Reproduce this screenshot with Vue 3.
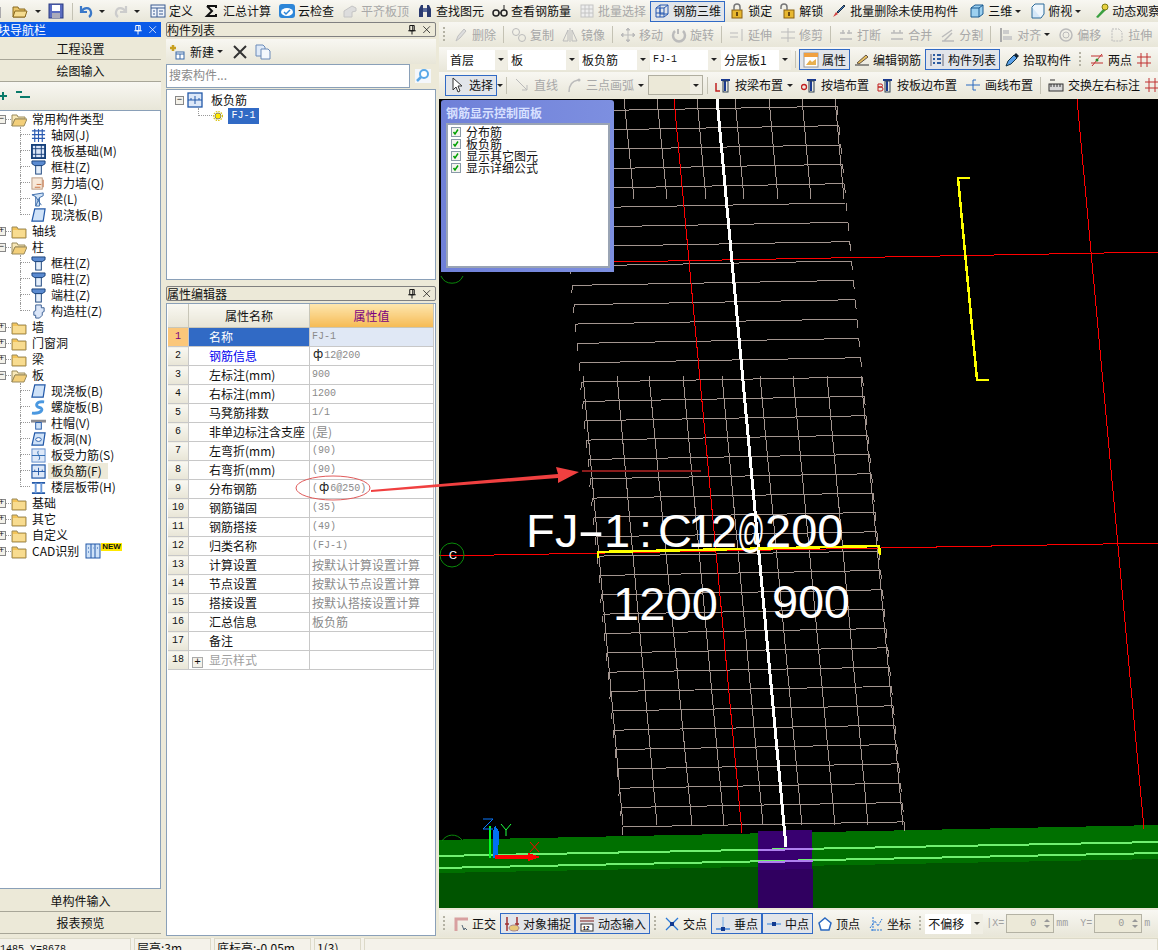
<template>
  <div class="app">
    <Bar class="bar top" :items="topBar" />

    <div class="body">
      <!-- left navigation -->
      <aside class="nav">
        <div class="nav-title">
          <span class="nav-name">模块导航栏</span>
          <span class="title-icons"><Ico n="pin" class="white" /><Ico n="close" class="white" /></span>
        </div>
        <button class="nav-btn first">工程设置</button>
        <button class="nav-btn">绘图输入</button>
        <div class="nav-tools">
          <Ico n="plus" /><Ico n="minus" />
        </div>
        <div class="nav-tree">
          <template v-for="group in tree" :key="group.name">
            <div class="tree-row">
              <span class="box">{{ group.open ? '−' : '+' }}</span>
              <span class="dash"></span>
              <Ico :n="group.open ? 'folderOpen' : 'folder'" class="folder" />
              <span class="group-name">{{ group.name }}</span>
              <template v-if="group.cad">
                <Ico n="cad" class="cad" />
                <span class="new">NEW</span>
              </template>
            </div>
            <template v-if="group.open">
              <div v-for="(c, i) in group.children" :key="c.t" class="tree-row child">
                <span class="tick" :class="{ more: i < group.children.length - 1 }"></span>
                <Ico :n="c.i" class="child-icon" />
                <span class="child-name" :class="{ current: c.cur }">{{ c.t }}</span>
              </div>
            </template>
          </template>
        </div>
        <button class="nav-btn bottom">单构件输入</button>
        <button class="nav-btn">报表预览</button>
      </aside>

      <!-- component list + property editor -->
      <section class="mid">
        <div class="pane-title">
          <span>构件列表</span>
          <span class="title-icons"><Ico n="pin" /><Ico n="close" /></span>
        </div>
        <div class="list-tools">
          <Ico n="newItem" class="new-ico" />
          <span>新建</span>
          <i class="caret"></i>
          <Ico n="cross" class="x-ico" />
          <Ico n="copy" />
        </div>
        <div class="search">
          <div class="search-input">搜索构件...</div>
          <div class="search-btn"><Ico n="search" /></div>
        </div>
        <div class="list-tree">
          <div class="list-row">
            <span class="box">−</span>
            <Ico n="slabBar" class="list-ico" />
            <span>板负筋</span>
          </div>
          <div class="list-row leaf">
            <span class="tick wide"></span>
            <Ico n="gear" class="gear" />
            <span class="picked">FJ-1</span>
          </div>
        </div>

        <div class="pane-title second">
          <span>属性编辑器</span>
          <span class="title-icons"><Ico n="pin" /><Ico n="close" /></span>
        </div>
        <div class="props">
          <table>
            <thead>
              <tr>
                <th class="num"></th>
                <th class="pname">属性名称</th>
                <th class="pvalue">属性值</th>
              </tr>
            </thead>
            <tbody>
              <tr v-for="(p, i) in props" :key="p.n" :class="{ sel: i === 0 }">
                <td class="num">{{ i + 1 }}</td>
                <td class="pname" :class="{ link: p.link, mute: p.mute }">
                  <span v-if="p.mute" class="plus-box">+</span>{{ p.n }}
                </td>
                <td class="pvalue" :class="{ mono: p.mono }">{{ p.pre }}<span v-if="p.sym" class="sym">ф</span>{{ p.v }}</td>
              </tr>
            </tbody>
          </table>
        </div>
      </section>

      <!-- drawing area -->
      <section class="work">
        <Bar class="bar r2" :items="row2" />
        <Bar class="bar r3" :items="row3" />
        <Bar class="bar r4" :items="row4" />

        <div class="canvas">
          <svg class="scene" viewBox="439 99 719 809" shape-rendering="crispEdges">
            <polygon points="439,840 1158,825 1158,908 439,908" fill="#007000" />
            <polygon points="439,873 1158,859 1158,908 439,908" fill="#005400" />
            <polygon points="758,831 812,830 813,908 758,908" fill="#380070" />
            <polygon points="758,870 813,869 813,908 758,908" fill="#300060" />
            <line x1="439" y1="856" x2="1158" y2="842" stroke="#70f070" stroke-width="2" />
            <line x1="439" y1="868" x2="1158" y2="853" stroke="#70f070" stroke-width="2" />
            <line x1="758" y1="850" x2="813" y2="849" stroke="#b080f0" stroke-width="2" />
            <line x1="758" y1="862" x2="813" y2="861" stroke="#b080f0" stroke-width="2" />

            <g stroke="#a3958f" stroke-width="1" fill="none">
              <line v-for="(l, i) in meshLines" :key="i" :x1="l[0]" :y1="l[1]" :x2="l[2]" :y2="l[3]" />
            </g>

            <line x1="674" y1="99" x2="742" y2="833" stroke="#f00" />
            <line x1="1077" y1="99" x2="1144" y2="829" stroke="#f00" />
            <line x1="614" y1="262" x2="1158" y2="252" stroke="#f00" />
            <line x1="439" y1="556" x2="1158" y2="543" stroke="#f00" />
            <line x1="717" y1="99" x2="786" y2="847" stroke="#fff" stroke-width="3" />

            <polyline points="970,178 958,178 977,380 989,380" fill="none" stroke="#ff0" stroke-width="2.5" />
            <polyline points="598,558 598,552 879,546 880,555" fill="none" stroke="#ff0" stroke-width="2.5" />
            <line x1="582" y1="471" x2="701" y2="471" stroke="#8a1c1c" stroke-width="2" />

            <g fill="none" stroke="#0a8a0a" shape-rendering="auto">
              <circle cx="452" cy="555" r="12" />
              <path d="M441 276 A12 12 0 0 0 463 276" />
              <path d="M442 841 A12 12 0 0 1 462 840" />
            </g>
            <g shape-rendering="auto" class="cad-text">
              <text x="449" y="559" class="grid-mark">C</text>
              <text x="526 555" y="547" class="big">FJ</text>
              <text x="577" y="547" class="big" textLength="28" lengthAdjust="spacingAndGlyphs">-</text>
              <text x="604 639 658 688 711" y="547" class="big">1:C12</text>
              <text x="737" y="547" class="big" textLength="28" lengthAdjust="spacingAndGlyphs">@</text>
              <text x="765" y="547" class="big">200</text>
              <text x="613" y="620" class="big" textLength="105">1200</text>
              <text x="772" y="618" class="big" textLength="78">900</text>
            </g>

            <line x1="490" y1="826" x2="490" y2="858" stroke="#00ff20" stroke-width="2" />
            <polygon points="493,858 493,832 495,825 499,832 498,858" fill="#0070f0" />
            <polygon points="495,855 528,855 528,853 541,857 528,861 528,859 495,859" fill="#f00" />
            <g shape-rendering="auto" fill="none" stroke-width="1">
              <path d="M483 819 H493 L483 829 H493" stroke="#0a78ff" />
              <path d="M501 824 L506 830 L511 824 M506 830 V836" stroke="#20ff40" />
              <path d="M530 842 L539 852 M539 842 L530 852" stroke="#f00" />
            </g>
          </svg>

          <div class="float">
            <div class="float-title">钢筋显示控制面板</div>
            <div class="float-body">
              <div v-for="c in checks" :key="c" class="check-row">
                <span class="check"><Ico n="tick" /></span>{{ c }}
              </div>
            </div>
          </div>
        </div>

        <Bar class="bar r5" :items="row5" />
      </section>
    </div>

    <footer class="status">
      <span class="cell c1">X=-1485 Y=8678</span>
      <span class="cell c2">层高:3m</span>
      <span class="cell c3">底标高:-0.05m</span>
      <span class="cell c4">1(3)</span>
      <span class="cell c5"></span>
    </footer>

    <!-- hand drawn note on top of the screenshot -->
    <svg class="note" viewBox="0 0 1158 950">
      <ellipse cx="333" cy="488" rx="37" ry="12" fill="none" stroke="#e05a5a" />
      <polygon points="371,490 558,474 556,467 579,472 558,483 558,478 371,492" fill="#f04040" />
    </svg>
  </div>
</template>

<script setup>
import { h } from 'vue'

const icons = {
  page: '<path d="M3 1h8l3 3v11H3z" fill="#fff" stroke="#667"/>',
  open: '<path d="M1 4h5l1 2h6v8H1z" fill="#e8c468" stroke="#8a6a20"/><path d="M3 8h12l-2 6H1z" fill="#f5dc90" stroke="#8a6a20"/>',
  save: '<rect x="1" y="1" width="14" height="14" fill="#5a6cc0" stroke="#2a3a80"/><rect x="4" y="2" width="8" height="6" fill="#fff"/><rect x="4" y="10" width="8" height="5" fill="#aab"/>',
  undo: '<path d="M3 3v6h6M3.5 8.5C6 4 12 4 13 9c.4 2-.5 4-2 5" fill="none" stroke="#3a78c8" stroke-width="2.2"/>',
  redo: '<path d="M13 3v6H7M12.500 8.500C10 4 4 4 3 9c-.4 2 .5 4 2 5" fill="none" stroke="#ccc" stroke-width="2.200"/>',
  define: '<rect x="1" y="2" width="14" height="12" fill="#eef3fb" stroke="#3a5a90"/><path d="M1 5h14M7 5v9M9 8h4M9 11h4M3 8h2M3 11h2" stroke="#3a5a90"/>',
  sigma: '<path d="M3 3h9v2M3 3l5 5-5 5h9v-2" fill="none" stroke="#111" stroke-width="2"/>',
  cloud: '<rect x="0" y="1" width="16" height="14" rx="3" fill="#2d86d8"/><ellipse cx="8" cy="9" rx="6" ry="4" fill="#fff"/><path d="M5 9l2 2 4-4" fill="none" stroke="#2d86d8" stroke-width="1.500"/>',
  level: '<path d="M2 13V8l8-5 4 2v3l-4 1v5H2z" fill="#ddd" stroke="#c4c4c4"/>',
  binoc: '<path d="M2 14V6l2-4h2v12zM10 14V2h2l2 4v8z" fill="#2a3a70"/><rect x="6" y="5" width="4" height="4" fill="#5a6a9a"/>',
  glasses: '<circle cx="4" cy="10" r="3" fill="none" stroke="#222" stroke-width="1.500"/><circle cx="12" cy="10" r="3" fill="none" stroke="#222" stroke-width="1.500"/><path d="M7 10h2M12 7V2" stroke="#222"/>',
  batch: '<rect x="2" y="2" width="12" height="12" fill="#eee" stroke="#c4c4c4"/><path d="M2 6h12M2 10h12M6 2v12M10 2v12" stroke="#c4c4c4"/>',
  grid3d: '<path d="M2 5l4-3h8v9l-4 3H2zM2 5h8v9M10 5l4-3M6 2v9H14M2 10h8M6 5v9" fill="none" stroke="#2858b0"/>',
  lock: '<rect x="3" y="7" width="10" height="8" fill="#e8b830" stroke="#8a6010"/><path d="M5 7V4a3 3 0 0 1 6 0v3" fill="none" stroke="#777" stroke-width="1.500"/><rect x="7" y="9" width="2" height="4" fill="#6a4a10"/>',
  unlock: '<rect x="4" y="7" width="10" height="8" fill="#e8b830" stroke="#8a6010"/><path d="M1 6V4a3 3 0 0 1 6 0v3" fill="none" stroke="#777" stroke-width="1.500"/><rect x="8" y="9" width="2" height="4" fill="#6a4a10"/>',
  brush: '<path d="M2 14l3-5 2 2z" fill="#d04040"/><path d="M6 9l7-7 1 1-7 7z" fill="#3a78c8" stroke="#234"/>',
  cube: '<path d="M2 5l4-3h8v9l-4 3H2z" fill="#9cd0f0" stroke="#1a5a90"/><path d="M2 5h8v9M10 5l4-3" fill="none" stroke="#1a5a90"/>',
  plan: '<path d="M3 4h9v11H3z" fill="#d5e8f8" stroke="#2a6a9a"/><path d="M3 4l3-3h9v10l-3 4" fill="#eef6fc" stroke="#2a6a9a"/>',
  orbit: '<path d="M3 14L11 5l2 2-8 8z" fill="#3aa040"/><circle cx="12" cy="4" r="3" fill="#e8d040" stroke="#7a7a10"/>',
  del: '<path d="M3 14l2-5 6-7 2 2-6 7z" fill="#ddd" stroke="#c0c0c0"/>',
  copyOff: '<circle cx="5" cy="5" r="3.500" fill="none" stroke="#bbb"/><circle cx="11" cy="11" r="3.500" fill="none" stroke="#bbb"/>',
  mirror: '<path d="M1 14L6 3v11zM15 14L10 3v11zM8 1v14" fill="none" stroke="#bbb"/>',
  move: '<path d="M8 1v14M1 8h14M8 1L6 3h4zM8 15l-2-2h4zM1 8l2-2v4zM15 8l-2-2v4z" stroke="#bbb" fill="#bbb"/>',
  rotate: '<path d="M4 4a6 6 0 1 0 8 0" fill="none" stroke="#bbb" stroke-width="2.500"/><path d="M7 2v5" stroke="#bbb" stroke-width="2"/>',
  extend: '<path d="M1 6h8M1 10h8M13 2v12" stroke="#bbb" fill="none"/>',
  trim: '<path d="M1 5h14M1 11h14M8 1v14" stroke="#bbb" fill="none"/>',
  breakOff: '<path d="M2 6h5M9 6h5M2 12h12M5 3v4M11 3v4" stroke="#bbb" stroke-width="1.500" fill="none"/>',
  merge: '<path d="M2 6h12M2 12h12M5 3v3M11 3v3" stroke="#bbb" stroke-width="1.500" fill="none"/>',
  split: '<path d="M2 14h12M2 10l10-7M4 14l8-8" stroke="#bbb" stroke-width="1.500" fill="none"/>',
  align: '<path d="M3 1v14" stroke="#aaa" stroke-width="2"/><rect x="5" y="3" width="6" height="4" fill="#ccc"/><rect x="5" y="9" width="9" height="4" fill="#ccc"/>',
  offset: '<circle cx="8" cy="8" r="6" fill="none" stroke="#bbb" stroke-width="1.500"/><circle cx="8" cy="8" r="3" fill="none" stroke="#bbb"/>',
  stretch: '<path d="M3 2h7l3 3v9H3z" fill="none" stroke="#bbb" stroke-dasharray="2 1"/>',
  attr: '<rect x="1" y="1" width="14" height="14" fill="#fff" stroke="#999"/><rect x="1" y="1" width="14" height="4" fill="#f0a040"/><path d="M3 13l4-5 2 2 4-3v6z" fill="#e8b050"/>',
  edit: '<path d="M1 13h14" stroke="#333"/><path d="M3 11L12 3l2 2-9 7z" fill="#e8c060" stroke="#654"/>',
  list: '<path d="M2 2v12M14 2v12" stroke="#667" /><path d="M4 3h2M8 3h4M4 7h2M8 7h4M4 11h2M8 11h4" stroke="#2a5aa0" stroke-width="2"/>',
  pick: '<path d="M2 14l2-5 6-6 3 3-6 6z" fill="#5aa0e8" stroke="#134"/><path d="M10 3l2-2 3 3-2 2z" fill="#123"/>',
  twoPt: '<path d="M3 14L13 2M2 4h12M2 11h12" stroke="#c03030" fill="none"/><circle cx="8" cy="8" r="1.500" fill="#2a8a2a"/>',
  cross2: '<path d="M1 5h14M1 11h14M5 1v14M11 1v14" stroke="#c03030" fill="none"/>',
  arrow: '<path d="M4 1v12l3-3 2 5 2-1-2-5h4z" fill="#fff" stroke="#333"/>',
  line: '<path d="M2 2l11 11M13 8v5H8" fill="none" stroke="#bbb"/>',
  arc: '<path d="M3 15C3 8 6 4 12 3" fill="none" stroke="#bbb" stroke-width="1.500"/><circle cx="13" cy="3" r="1.500" fill="#bbb"/>',
  beamL: '<path d="M6 3h9M10 3v11" stroke="#1a3a90" stroke-width="2" fill="none"/><path d="M1 6v8h4" fill="none" stroke="#c02020" stroke-width="1.500"/><rect x="8" y="4" width="5" height="11" fill="none" stroke="#345"/>',
  wallQ: '<path d="M6 3h9M10 3v11" stroke="#1a3a90" stroke-width="2" fill="none"/><circle cx="3" cy="10" r="2.500" fill="none" stroke="#c02020" stroke-width="1.300"/><rect x="8" y="4" width="5" height="11" fill="none" stroke="#345"/>',
  edgeB: '<path d="M6 3h9M10 3v11" stroke="#1a3a90" stroke-width="2" fill="none"/><path d="M1 7h3a1.500 1.500 0 0 1 0 3H1h3a1.500 1.500 0 0 1 0 4H1z" fill="none" stroke="#c02020"/><rect x="8" y="4" width="5" height="11" fill="none" stroke="#345"/>',
  drawLine: '<path d="M1 8h14M8 3v10M8 3h3M8 13h3" stroke="#2a6ac0" fill="none"/>',
  swap: '<rect x="1" y="7" width="14" height="7" fill="#d8d8d8" stroke="#333"/><path d="M3 7v3M6 7v3M9 7v3M12 7v3M2 3h5" stroke="#333"/>',
  ortho: '<path d="M3 15V3h12" fill="none" stroke="#d8a0a0" stroke-width="3"/><path d="M9 9l2 5 1-2 2 2" stroke="#567" fill="none"/>',
  snap: '<path d="M3 1v14M13 1v14M1 8h4M11 8h4" stroke="#a03030" stroke-width="1.500"/><ellipse cx="10" cy="12" rx="5" ry="3" fill="#e8c878" stroke="#a88"/>',
  dyn: '<path d="M1 2h14M1 5h14" stroke="#a06060" stroke-width="1.500"/><rect x="2" y="8" width="12" height="7" fill="#fff" stroke="#333"/><text x="3.500" y="14" font-size="6" font-family="Liberation Mono" font-weight="700">12</text>',
  inter: '<path d="M2 2l12 12M14 2L2 14" stroke="#2a78d8" stroke-width="1.300"/><rect x="6" y="6" width="4" height="4" fill="#123a90"/>',
  perp: '<path d="M1 13h14" stroke="#2a78d8" stroke-width="1.300"/><path d="M8 1v14" stroke="#8ab8e8" stroke-width="1.300"/><rect x="6" y="11" width="4" height="4" fill="#123a90"/>',
  mid: '<path d="M1 8h14" stroke="#6aa0e0" stroke-width="1.500"/><rect x="6" y="6" width="4" height="4" fill="#123a90"/>',
  vertex: '<path d="M8 2l6 5-2 7H4L2 7z" fill="#fff" stroke="#2a68c0" stroke-width="1.500"/>',
  coord: '<path d="M3 14h12M5 1v14M2 12l5-7 3 5 4-7" fill="none" stroke="#2a78d8" stroke-dasharray="2 1"/>',
  pin: '<path d="M5 2h6v7H5zM3 9h10M8 9v5M9 2v7" fill="none" stroke="currentColor" stroke-width="1.300"/>',
  close: '<path d="M3 3l9 9M12 3l-9 9" stroke="currentColor" fill="none"/>',
  plus: '<path d="M6 2v8M2 6h8" stroke="#0a7a6a" stroke-width="2"/>',
  minus: '<path d="M1 2h6M5 7h10" stroke="#0a7a6a" stroke-width="2"/>',
  folder: '<path d="M1 4h5l1 2h8v9H1z" fill="#f3c45a" stroke="#9a8a5a"/><rect x="2" y="7" width="12" height="7" fill="#f8dc90"/>',
  folderOpen: '<path d="M1 4h5l1 2h7v2H4l-3 7z" fill="#f8e8b8" stroke="#9a8a5a"/><path d="M4 8h12l-3 7H1z" fill="#f3cf7a" stroke="#9a8a5a"/>',
  axis: '<path d="M1 3h14M1 7h14M1 11h14M4 1v14M8 1v14M12 1v14" stroke="#2858b0" stroke-width="1.200"/>',
  raft: '<rect x="1" y="1" width="14" height="14" fill="#dbe6f8" stroke="#16407a" stroke-width="2"/><path d="M1 5h14M1 11h14M5 1v14M11 1v14" stroke="#16407a"/>',
  column: '<path d="M1 1h14v3l-3 2H4L1 4z" fill="#5a8ad0" stroke="#16407a"/><rect x="5" y="6" width="6" height="9" fill="#e4eefa" stroke="#16407a"/>',
  wall: '<rect x="1" y="2" width="11" height="12" fill="#f8e8d8" stroke="#b89880"/><path d="M4 12h6M6 9h5M13 4v8" stroke="#c87040"/>',
  beam: '<path d="M1 3l12-2v3L9 6v9H5V5z" fill="#cfe2f6" stroke="#3a6aa8"/><path d="M5 5l6 9M9 6l-4 9" stroke="#3a6aa8"/>',
  slab: '<path d="M4 1h11l-2 13H1z" fill="#cfe2f8" stroke="#2258a8" stroke-width="1.300"/>',
  tie: '<path d="M5 1h6v3h3v4l-2 1v3l-3 3H5V12H3V8l2-1z" fill="#dbe6f8" stroke="#345a90"/>',
  spiral: '<path d="M14 2C5 1 4 7 9 8c5 1 3 7-8 6" fill="none" stroke="#4a98e0" stroke-width="3"/>',
  cap: '<path d="M0 4h16v3H0z" fill="#8a8a90"/><rect x="5" y="7" width="6" height="7" fill="#cfe2f8" stroke="#2258a8"/>',
  hole: '<path d="M4 1h11l-2 13H1z" fill="#cfe2f8" stroke="#2258a8" stroke-width="1.300"/><ellipse cx="8" cy="8" rx="3" ry="2" fill="#fff" stroke="#2258a8"/>',
  stress: '<rect x="1" y="1" width="14" height="14" fill="#dde8f8" stroke="#5a88c8"/><path d="M1 8h14M8 3c-3 3 4 7 0 10" fill="none" stroke="#2a68b0"/>',
  slabBar: '<rect x="1" y="1" width="14" height="14" fill="#dde8f8" stroke="#2258a8" stroke-width="1.300"/><path d="M1 8h14M8 4v8M4 6v2M12 6v2" stroke="#2258a8"/>',
  strip: '<path d="M1 3h14M1 14h14" stroke="#2258a8" stroke-width="2"/><path d="M5 3v11M11 3v11" stroke="#6a98d8" stroke-width="2"/>',
  cad: '<rect x="1" y="1" width="14" height="14" fill="#cfe2f8" stroke="#2258a8"/><path d="M6 1v14M10 1v14M3 5h1M3 9h1M8 5h0.500M12 5h1" stroke="#2258a8"/>',
  newItem: '<path d="M4 1v6M1 4h6" stroke="#c8a020" stroke-width="2.500"/><rect x="7" y="8" width="8" height="7" fill="#fff" stroke="#3a6aa8"/><path d="M7 10h8M11 10v5" stroke="#3a6aa8"/>',
  cross: '<path d="M2 2l12 12M14 2L2 14" stroke="#333" stroke-width="2"/>',
  copy: '<path d="M1 1h7l2 2v9H1z" fill="#dfeaf8" stroke="#6a8ab8"/><path d="M6 5h7l2 2v8H6z" fill="#f4f8fd" stroke="#6a8ab8"/>',
  search: '<rect x="0" y="1" width="16" height="14" fill="#f4f7fb"/><circle cx="9" cy="6" r="4" fill="#fff" stroke="#5aa8e8" stroke-width="2"/><path d="M6 9l-4 4" stroke="#5aa8e8" stroke-width="2.500"/>',
  gear: '<circle cx="8" cy="8" r="4" fill="#ffe800" stroke="#666"/><circle cx="8" cy="8" r="6" fill="none" stroke="#d8c000" stroke-width="1.500" stroke-dasharray="2 1.500"/>',
  tick: '<path d="M3 8l3 4 6-9" fill="none" stroke="#00a000" stroke-width="3"/>'
}

// small helpers, written as render functions so the bars can be plain data
const Ico = (p) => h('svg', { class: 'ico', viewBox: '0 0 16 16', innerHTML: icons[p.n] })
Ico.props = ['n']

const renderItem = (t, i) => {
  if (t.sep) return h('span', { key: i, class: 'sep' })
  if (t.grip) return h('span', { key: i, class: 'grip' })
  if (t.gap) return h('span', { key: i, style: { width: t.gap + 'px', flex: 'none' } })
  if (t.combo !== undefined) {
    return h('span', { key: i, class: ['combo', { flat: t.flat }], style: { width: t.w + 'px' } }, [
      h('span', { class: ['combo-text', { latin: t.latin }] }, t.combo),
      h('span', { class: 'combo-btn' }, [h('i', { class: 'caret' })])
    ])
  }
  if (t.spin) {
    return h('span', { key: i, class: 'spin' }, [
      h('span', { class: 'spin-val' }, '0'),
      h('span', { class: 'spin-arrows' }, [h('i', { class: 'up' }), h('i', { class: 'down' })])
    ])
  }
  if (t.label) return h('span', { key: i, class: 'faint' }, t.label)
  return h('span', { key: i, class: ['tool', { off: t.off, on: t.on, only: !t.t }] }, [
    t.i ? h(Ico, { n: t.i }) : null,
    t.t ? h('span', t.t) : null,
    t.caret ? h('i', { class: 'caret' }) : null
  ])
}

const Bar = (p) => h('div', p.items.map(renderItem))
Bar.props = ['items']

const topBar = [
  { i: 'page' }, { gap: 10 }, { i: 'open' }, { gap: 7 }, { caret: true }, { gap: 7 }, { i: 'save' }, { gap: 5 }, { sep: true }, { gap: 2 },
  { i: 'undo' }, { gap: 5 }, { caret: true }, { gap: 8 }, { i: 'redo', off: true }, { gap: 5 }, { caret: true }, { gap: 6 },
  { i: 'define', t: '定义' }, { gap: 3 }, { i: 'sigma', t: '汇总计算' }, { i: 'cloud', t: '云检查' },
  { i: 'level', t: '平齐板顶', off: true }, { i: 'binoc', t: '查找图元' }, { i: 'glasses', t: '查看钢筋量' },
  { i: 'batch', t: '批量选择', off: true }, { i: 'grid3d', t: '钢筋三维', on: true },
  { i: 'lock', t: '锁定' }, { i: 'unlock', t: '解锁' }, { i: 'brush', t: '批量删除未使用构件' }, { gap: 3 },
  { i: 'cube', t: '三维', caret: true }, { i: 'plan', t: '俯视', caret: true }, { gap: 4 }, { i: 'orbit', t: '动态观察' }
]

const row2 = [
  { grip: true }, { i: 'del', t: '删除', off: true }, { sep: true },
  { i: 'copyOff', t: '复制', off: true }, { i: 'mirror', t: '镜像', off: true }, { sep: true },
  { i: 'move', t: '移动', off: true }, { i: 'rotate', t: '旋转', off: true }, { sep: true },
  { i: 'extend', t: '延伸', off: true }, { i: 'trim', t: '修剪', off: true }, { sep: true },
  { i: 'breakOff', t: '打断', off: true }, { i: 'merge', t: '合并', off: true }, { i: 'split', t: '分割', off: true }, { sep: true },
  { i: 'align', t: '对齐', off: true, caret: true }, { i: 'offset', t: '偏移', off: true }, { i: 'stretch', t: '拉伸', off: true }
]

const row3 = [
  { combo: '首层', w: 60 }, { combo: '板', w: 70 }, { combo: '板负筋', w: 70 },
  { combo: 'FJ-1', w: 70, latin: true }, { combo: '分层板1', w: 70 }, { sep: true },
  { i: 'attr', t: '属性', on: true }, { i: 'edit', t: '编辑钢筋' }, { i: 'list', t: '构件列表', on: true },
  { i: 'pick', t: '拾取构件' }, { grip: true }, { i: 'twoPt', t: '两点' }, { i: 'cross2' }
]

const row4 = [
  { i: 'arrow', t: '选择', on: true }, { caret: true }, { sep: true },
  { i: 'line', t: '直线', off: true }, { i: 'arc', t: '三点画弧', off: true, caret: true },
  { combo: '', w: 55, flat: true }, { sep: true },
  { i: 'beamL', t: '按梁布置', caret: true }, { i: 'wallQ', t: '按墙布置' }, { i: 'edgeB', t: '按板边布置' },
  { i: 'drawLine', t: '画线布置' }, { sep: true }, { i: 'swap', t: '交换左右标注' }, { i: 'cross2' }
]

const row5 = [
  { grip: true }, { i: 'ortho', t: '正交' }, { i: 'snap', t: '对象捕捉', on: true }, { i: 'dyn', t: '动态输入', on: true },
  { grip: true }, { i: 'inter', t: '交点' }, { i: 'perp', t: '垂点', on: true }, { i: 'mid', t: '中点', on: true },
  { i: 'vertex', t: '顶点' }, { i: 'coord', t: '坐标' }, { grip: true }, { combo: '不偏移', w: 58 },
  { label: '|X=' }, { spin: true }, { label: 'mm' }, { gap: 8 }, { label: 'Y=' }, { spin: true }, { label: 'm' }
]

const tree = [
  {
    name: '常用构件类型', open: true,
    children: [
      { i: 'axis', t: '轴网(J)' }, { i: 'raft', t: '筏板基础(M)' }, { i: 'column', t: '框柱(Z)' },
      { i: 'wall', t: '剪力墙(Q)' }, { i: 'beam', t: '梁(L)' }, { i: 'slab', t: '现浇板(B)' }
    ]
  },
  { name: '轴线' },
  {
    name: '柱', open: true,
    children: [
      { i: 'column', t: '框柱(Z)' }, { i: 'column', t: '暗柱(Z)' }, { i: 'column', t: '端柱(Z)' }, { i: 'tie', t: '构造柱(Z)' }
    ]
  },
  { name: '墙' },
  { name: '门窗洞' },
  { name: '梁' },
  {
    name: '板', open: true,
    children: [
      { i: 'slab', t: '现浇板(B)' }, { i: 'spiral', t: '螺旋板(B)' }, { i: 'cap', t: '柱帽(V)' }, { i: 'hole', t: '板洞(N)' },
      { i: 'stress', t: '板受力筋(S)' }, { i: 'slabBar', t: '板负筋(F)', cur: true }, { i: 'strip', t: '楼层板带(H)' }
    ]
  },
  { name: '基础' },
  { name: '其它' },
  { name: '自定义' },
  { name: 'CAD识别', cad: true }
]

const props = [
  { n: '名称', v: 'FJ-1', mono: true },
  { n: '钢筋信息', sym: true, v: '12@200', link: true, mono: true },
  { n: '左标注(mm)', v: '900', mono: true },
  { n: '右标注(mm)', v: '1200', mono: true },
  { n: '马凳筋排数', v: '1/1', mono: true },
  { n: '非单边标注含支座', v: '(是)' },
  { n: '左弯折(mm)', v: '(90)', mono: true },
  { n: '右弯折(mm)', v: '(90)', mono: true },
  { n: '分布钢筋', pre: '(', sym: true, v: '6@250)', mono: true },
  { n: '钢筋锚固', v: '(35)', mono: true },
  { n: '钢筋搭接', v: '(49)', mono: true },
  { n: '归类名称', v: '(FJ-1)', mono: true },
  { n: '计算设置', v: '按默认计算设置计算' },
  { n: '节点设置', v: '按默认节点设置计算' },
  { n: '搭接设置', v: '按默认搭接设置计算' },
  { n: '汇总信息', v: '板负筋' },
  { n: '备注', v: '' },
  { n: '显示样式', v: '', mute: true }
]

const checks = ['分布筋', '板负筋', '显示其它图元', '显示详细公式']

// rebar mesh of the 3D view
const meshLines = []
for (let i = 0; i < 38; i++) {
  const yr = 106.3 + 19.34 * i
  const xr = 837 + (yr - 106) * 0.0936
  const xl = xr - 281
  const yl = yr + 5
  meshLines.push([xl, yl, xr, yr], [xl, yl, xl - 0.5, yl + 8], [xr, yr, xr + 1, yr + 9])
}
const upper = [[624, 634], [657, 667], [697, 706], [735, 744], [769, 778], [802, 811], [835, 844]]
upper.forEach(([a, b]) => meshLines.push([a, 99, b, 199]))
const lower = [[583, 623], [617, 657], [649, 692], [683, 724], [722, 763], [760, 802], [793, 835], [827, 868], [861, 903]]
lower.forEach(([a, b]) => meshLines.push([a, 376, b, 825]))
</script>

<style>
html,
body {
  margin: 0;
  overflow: hidden;
}
</style>

<style scoped>
.app {
  position: relative;
  width: 1158px;
  height: 950px;
  overflow: hidden;
  background: #ece9d8;
  font: 12px/16px "Noto Sans CJK SC", "Liberation Sans", sans-serif;
  color: #111;
  display: flex;
  flex-direction: column;
}

.app :deep(.ico) {
  width: 16px;
  height: 16px;
  flex: none;
  display: block;
}

.bar {
  display: flex;
  align-items: center;
  flex: none;
  overflow: hidden;
  white-space: nowrap;
  background: linear-gradient(#f8f7f2, #e8e6d8);
}

.top {
  height: 22px;
  margin-left: -14px;
  width: 1172px;
}

.bar :deep(.tool) {
  display: inline-flex;
  align-items: center;
  gap: 4px;
  padding: 0 3px;
  height: 21px;
  box-sizing: border-box;
  border: 1px solid transparent;
  flex: none;
}

.top :deep(.tool) {
  gap: 3px;
}

.bar :deep(.tool.only) {
  padding: 0;
  border: 0;
}

.r2 :deep(.tool),
.r3 :deep(.tool),
.r5 :deep(.tool) {
  gap: 3px;
}

.r2 :deep(.sep) {
  margin: 0 2px;
}

.bar :deep(.tool.off) {
  color: #a8a8a8;
}

.bar :deep(.tool.on) {
  border-color: #316ac5;
  background: #e2e5ea;
}

.bar :deep(.caret),
.list-tools .caret {
  display: block;
  width: 0;
  height: 0;
  flex: none;
  border: 3px solid transparent;
  border-top: 3px solid #222;
  border-bottom: 0;
}

.bar :deep(.sep) {
  width: 1px;
  height: 17px;
  margin: 0 3px;
  background: #c4c2b4;
  flex: none;
}

.bar :deep(.grip) {
  width: 2px;
  height: 16px;
  margin: 0 4px;
  flex: none;
  background: repeating-linear-gradient(#b4b2a4 0 2px, transparent 2px 4px);
}

.bar :deep(.combo) {
  display: inline-flex;
  align-items: center;
  justify-content: space-between;
  height: 20px;
  margin-right: 1px;
  background: #fff;
  box-sizing: border-box;
  flex: none;
  padding-left: 3px;
}

.bar :deep(.combo.flat) {
  background: #ece9d8;
  border: 1px solid #b0aea0;
}

.bar :deep(.combo-text.latin) {
  font: 10px "Liberation Mono", monospace;
}

.bar :deep(.combo-btn) {
  width: 12px;
  height: 100%;
  display: flex;
  align-items: center;
  justify-content: center;
  background: #f0eee4;
}

.bar :deep(.spin) {
  display: inline-flex;
  align-items: center;
  justify-content: flex-end;
  width: 48px;
  height: 19px;
  box-sizing: border-box;
  border: 1px solid #b4b2a4;
  background: #ece9d8;
  color: #999;
  flex: none;
  font: 10px "Liberation Mono", monospace;
}

.bar :deep(.spin-arrows) {
  width: 12px;
  margin-left: 5px;
  display: flex;
  flex-direction: column;
  align-items: center;
  gap: 3px;
}

.bar :deep(.up) {
  border: 3px solid transparent;
  border-bottom: 3px solid #999;
  border-top: 0;
}

.bar :deep(.down) {
  border: 3px solid transparent;
  border-top: 3px solid #999;
  border-bottom: 0;
}

.bar :deep(.faint) {
  color: #a0a0a0;
  font: 10px "Liberation Mono", monospace;
  margin: 0 2px;
  flex: none;
}

.body {
  flex: none;
  height: 916px;
  display: flex;
}

/* left navigation */
.nav {
  width: 161px;
  flex: none;
  display: flex;
  flex-direction: column;
}

.nav-title {
  height: 15px;
  flex: none;
  background: #0a5ae8;
  color: #fff;
  display: flex;
  align-items: center;
  justify-content: space-between;
  overflow: hidden;
}

.nav-name {
  margin-left: -14px;
}

.title-icons {
  display: flex;
  gap: 3px;
  margin-right: 2px;
}

.title-icons .ico {
  width: 12px;
  height: 12px;
}

.white {
  color: #fff;
}

.nav-btn {
  height: 22px;
  flex: none;
  padding: 0;
  font: inherit;
  color: #111;
  background: #ece9d8;
  border: 0;
  border-bottom: 1px solid #a8a698;
  text-align: center;
}

.nav-btn.first {
  margin-top: 1px;
}

.nav-btn.bottom {
  margin-top: 1px;
}

.nav-tools {
  height: 28px;
  flex: none;
  display: flex;
  align-items: center;
  gap: 2px;
  margin-left: -3px;
  padding-top: 3px;
  box-sizing: border-box;
  background: linear-gradient(#f8f7f2, #e8e6d8);
}

.nav-tree {
  height: 779px;
  flex: none;
  overflow: hidden;
  box-sizing: border-box;
  background: #fff;
  border: 1px solid #8aa0b8;
  border-left: 0;
}

.tree-row {
  height: 16px;
  display: flex;
  align-items: center;
  white-space: nowrap;
  position: relative;
}

.box {
  width: 9px;
  height: 9px;
  box-sizing: border-box;
  flex: none;
  border: 1px solid #888;
  background: #f4f2ea;
  font: 9px/7px "Liberation Mono", monospace;
  text-align: center;
}

.tree-row > .box {
  margin-left: -3px;
}

.dash {
  width: 5px;
  flex: none;
  border-top: 1px dotted #999;
}

.folder {
  margin-right: 5px;
}

.group-name {
  line-height: 16px;
}

.cad {
  margin-left: 6px;
}

.new {
  align-self: flex-start;
  font: 700 8px/8px "Liberation Sans", sans-serif;
  background: #ffe800;
  color: #111;
  padding: 0 1px;
}

.tick {
  width: 10px;
  height: 8px;
  flex: none;
  align-self: flex-start;
  margin-left: 20px;
  box-sizing: border-box;
  border-left: 1px dotted #999;
  border-bottom: 1px dotted #999;
  position: relative;
}

.tick.more::after {
  content: "";
  position: absolute;
  left: -1px;
  top: 8px;
  height: 8px;
  border-left: 1px dotted #999;
}

.child-icon {
  margin-left: 1px;
  width: 15px !important;
  height: 15px !important;
}

.child-name {
  margin-left: 2px;
  padding: 0 3px;
}

.child-name.current {
  background: #ece9d8;
  padding-right: 6px;
}

/* middle column */
.mid {
  width: 270px;
  margin-left: 5px;
  flex: none;
  display: flex;
  flex-direction: column;
}

.pane-title {
  height: 15px;
  flex: none;
  display: flex;
  align-items: center;
  justify-content: space-between;
  box-sizing: border-box;
  border: 1px solid #808080;
  border-radius: 2px;
  background: #ece9d8;
}

.pane-title.second {
  margin-top: 6px;
}

.list-tools {
  height: 25px;
  margin-top: 2px;
  flex: none;
  display: flex;
  align-items: center;
  padding-left: 3px;
  gap: 3px;
  background: linear-gradient(#f8f7f2, #e8e6d8);
}

.new-ico {
  margin-right: 2px;
}

.x-ico {
  margin: 0 4px 0 6px;
}

.search {
  height: 24px;
  flex: none;
  display: flex;
}

.search-input {
  width: 244px;
  height: 24px;
  box-sizing: border-box;
  border: 1px solid #8aa0b8;
  background: #fff;
  color: #8a8a8a;
  padding: 2px 2px;
}

.search-btn {
  flex: 1;
  display: flex;
  align-items: center;
  justify-content: center;
}

.list-tree {
  height: 191px;
  margin-top: 1px;
  flex: none;
  box-sizing: border-box;
  background: #fff;
  border: 1px solid #8aa0b8;
  padding-top: 2px;
}

.list-row {
  height: 16px;
  display: flex;
  align-items: center;
  padding-left: 8px;
  gap: 3px;
}

.list-ico {
  margin-right: 5px;
}

.list-row.leaf {
  padding-left: 0;
  gap: 0;
}

.tick.wide {
  margin-left: 31px;
  width: 14px;
}

.gear {
  width: 12px !important;
  height: 12px !important;
  margin-right: 4px;
}

.picked {
  width: 31px;
  height: 16px;
  background: #316ac5;
  color: #fff;
  font: 10px/16px "Liberation Mono", monospace;
  text-align: center;
}

.props {
  height: 633px;
  margin-top: 2px;
  flex: none;
  box-sizing: border-box;
  background: #fff;
  border: 1px solid #8aa0b8;
  padding: 0 1px 1px;
}

table {
  width: 266px;
  table-layout: fixed;
  border-collapse: collapse;
}

th {
  height: 23px;
  padding: 0;
  font-weight: 400;
  background: linear-gradient(#f9f8f2, #e8e5d6);
  border-right: 1px solid #c8c6b8;
  border-bottom: 1px solid #c8c6b8;
}

th.num {
  width: 20px;
}

th.pname {
  width: 120px;
}

th.pvalue {
  background: linear-gradient(#fde6ae, #f6bb55);
  color: #7a0080;
}

td {
  height: 18px;
  padding: 0;
  border-right: 1px solid #c8c8c8;
  border-bottom: 1px solid #c8c8c8;
  line-height: 16px;
  white-space: nowrap;
  overflow: hidden;
}

td.num {
  text-align: center;
  background: linear-gradient(#f9f8f2, #e8e5d6);
  font: 10px/18px "Liberation Mono", monospace;
}

td.pname {
  padding-left: 20px;
}

td.pname.link {
  color: #0000f0;
}

td.pname.mute {
  padding-left: 3px;
  color: #a0a0a0;
}

.plus-box {
  display: inline-block;
  width: 11px;
  height: 11px;
  box-sizing: border-box;
  border: 1px solid #aaa;
  background: #f4f2ea;
  color: #111;
  font: 11px/9px "Liberation Mono", monospace;
  text-align: center;
  margin-right: 6px;
}

td.pvalue {
  padding-left: 2px;
  color: #8a8a8a;
}

td.pvalue.mono {
  font: 10px/18px "Liberation Mono", monospace;
}

.sym {
  color: #222;
  font: 400 12px/0 "DejaVu Sans", sans-serif;
  margin: 0 1px;
}

tr.sel td.num {
  background: #fbc77a;
  color: #7a0080;
}

tr.sel td.pname {
  background: #316ac5;
  color: #fff;
}

tr.sel td.pvalue {
  background: #e0e8f5;
}

/* drawing area */
.work {
  width: 719px;
  margin-left: 3px;
  flex: none;
  display: flex;
  flex-direction: column;
}

.r2,
.r3 {
  height: 25px;
}

.r3 {
  padding-left: 8px;
}

.r4 {
  height: 26px;
  padding-left: 6px;
}

.r5 {
  height: 27px;
  margin-top: 2px;
}

.canvas {
  position: relative;
  height: 809px;
  margin-top: 1px;
  flex: none;
  background: #000;
  overflow: hidden;
}

.scene {
  display: block;
  width: 719px;
  height: 809px;
}

.cad-text text {
  fill: #fff;
  font-family: "Liberation Sans", sans-serif;
}

.big {
  font-size: 47px;
}

.grid-mark {
  font-size: 11px;
}

.float {
  position: absolute;
  left: 2px;
  top: 1px;
  width: 173px;
  height: 172px;
  box-sizing: border-box;
  padding: 0 4px 4px 5px;
  background: linear-gradient(90deg, #6f80d8, #7d8fe0);
  border-radius: 3px 3px 0 0;
  display: flex;
  flex-direction: column;
}

.float-title {
  height: 23px;
  flex: none;
  font-weight: 700;
  line-height: 25px;
  color: #d8e0ff;
}

.float-body {
  flex: 1;
  background: #fff;
  border: 2px solid #9aa4b4;
  padding-top: 1px;
}

.check-row {
  height: 12px;
  line-height: 12px;
  display: flex;
  align-items: center;
  padding-left: 3px;
}

.check {
  width: 10px;
  height: 10px;
  box-sizing: border-box;
  border: 1px solid #8a9aa8;
  margin-right: 5px;
  background: #f4f4ee;
  flex: none;
}

.check .ico {
  width: 8px;
  height: 8px;
}

.status {
  flex: none;
  height: 12px;
  display: flex;
  gap: 3px;
  background: #f4f2ea;
}

.cell {
  height: 24px;
  box-sizing: border-box;
  padding: 1px 2px;
  border: 1px solid #dcd9c8;
  flex: none;
}

.c1 {
  width: 132px;
  margin-left: -1px;
  padding-left: 0;
  text-indent: -18px;
  overflow: hidden;
  font: 10px/20px "Liberation Mono", monospace;
}

.c2 {
  width: 77px;
}

.c3 {
  width: 97px;
}

.c4 {
  width: 47px;
}

.c5 {
  flex: 1;
}

.note {
  position: absolute;
  left: 0;
  top: 0;
  width: 1158px;
  height: 950px;
  pointer-events: none;
}
</style>
